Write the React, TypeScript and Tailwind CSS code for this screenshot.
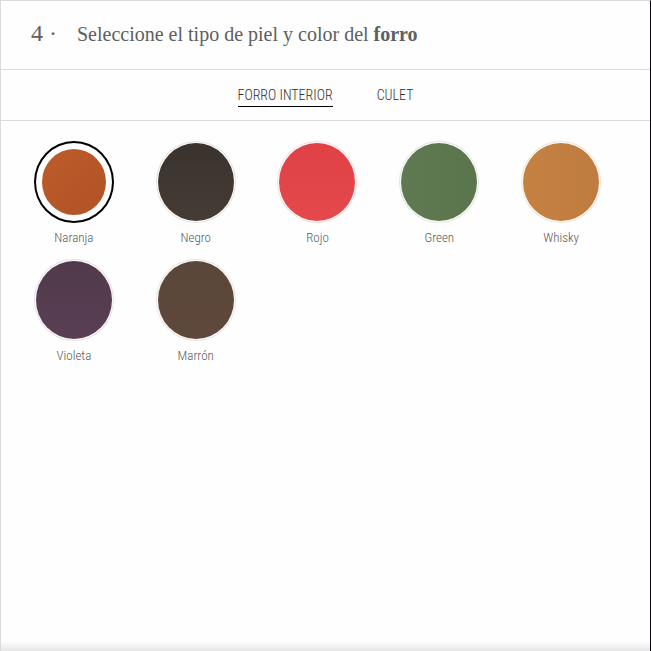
import { useState } from "react";

type Leather = { name: string; fill: string; ring: string };

const leathers: Leather[] = [
  { name: "Naranja", fill: "bg-linear-to-br from-[#be5c2a] to-[#b05226]", ring: "border-[#f3d9cc]" },
  { name: "Negro", fill: "bg-linear-to-b from-[#39322d] to-[#463c35]", ring: "border-[#e6e2e1]" },
  { name: "Rojo", fill: "bg-linear-to-b from-[#df4146] to-[#e5494c]", ring: "border-[#f8dddd]" },
  { name: "Green", fill: "bg-linear-to-r from-[#5f7a52] to-[#5a744c]", ring: "border-[#dfe8da]" },
  { name: "Whisky", fill: "bg-linear-to-r from-[#c58142] to-[#bf7c40]", ring: "border-[#f4e3d3]" },
  { name: "Violeta", fill: "bg-linear-to-b from-[#503a4b] to-[#5a3f53]", ring: "border-[#e6dde6]" },
  { name: "Marrón", fill: "bg-linear-to-b from-[#5a463a] to-[#5f483c]", ring: "border-[#ece2dc]" },
];

const tabs = ["FORRO INTERIOR", "CULET"];

export default function App() {
  const [tab, setTab] = useState(tabs[0]);
  const [selected, setSelected] = useState("Naranja");

  return (
    <main className="flex min-h-screen flex-col border-t border-r border-l border-t-[#dadada] border-r-[#08000c] border-l-[#dadada] bg-[#fefefe] font-['Roboto_Condensed',Roboto,sans-serif]">
      <header className="flex items-baseline gap-5 border-b border-[#dadada] px-[30px] pt-4 pb-[19px] font-['Liberation_Serif',serif] text-[#5c605f]">
        <span className="text-[24px] leading-8">4 ·</span>
        <h1 className="text-[20px] leading-8">
          Seleccione el tipo de piel y color del <strong>forro</strong>
        </h1>
      </header>

      <nav className="flex justify-center gap-11 border-b border-[#dadada] pt-4 pb-[13px]">
        {tabs.map((name) => (
          <button
            key={name}
            type="button"
            onClick={() => setTab(name)}
            className={`border-b pb-px text-[14px] leading-[19px] font-light text-[#303030] ${
              tab === name ? "border-black" : "border-transparent"
            }`}
          >
            {name}
          </button>
        ))}
      </nav>

      <fieldset
        aria-label="Color del forro"
        className="grid grid-cols-[repeat(auto-fill,minmax(120px,1fr))] gap-y-3 pt-5 pr-7 pl-3"
      >
        {leathers.map(({ name, fill, ring }) => (
          <label key={name} className="flex cursor-pointer flex-col items-center gap-1.5">
            <input
              type="radio"
              name="color"
              value={name}
              checked={selected === name}
              onChange={() => setSelected(name)}
              className={`h-[82px] w-20 cursor-pointer appearance-none rounded-[50%] bg-clip-content ${fill} ${
                selected === name ? "border-2 border-black p-1.5" : `border p-px ${ring}`
              }`}
            />
            <span className="text-[13px] leading-[18px] font-light text-[#585858]">{name}</span>
          </label>
        ))}
      </fieldset>

      <div className="mt-auto h-2.5 bg-linear-to-b from-[#fefefe] to-[#e6e6e6]" />
    </main>
  );
}
